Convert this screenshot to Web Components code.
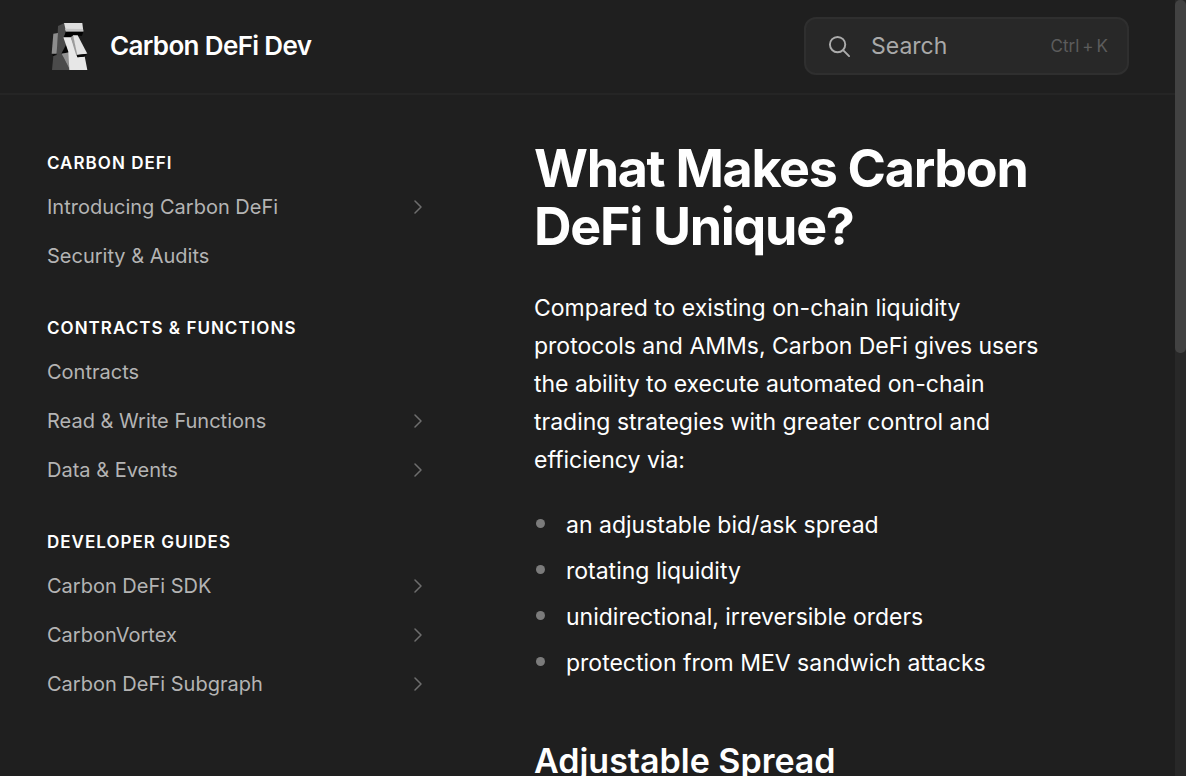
<!DOCTYPE html>
<html lang="en">
<head>
<meta charset="utf-8">
<meta name="viewport" content="width=device-width, initial-scale=1">
<title>What Makes Carbon DeFi Unique? | Carbon DeFi Dev</title>
<style>
  body { margin: 0; background: #1f1f1f; color: #fff; font-family: Inter, "Liberation Sans", sans-serif; }
</style>
</head>
<body>
<docs-app>
  <docs-header slot="header">
    <docs-brand slot="brand" href="#home">Carbon DeFi Dev</docs-brand>
    <docs-search slot="search"></docs-search>
  </docs-header>
  <docs-sidebar slot="nav">
    <nav-group heading="Carbon DeFi">
      <nav-item href="#introducing" expandable>Introducing Carbon DeFi</nav-item>
      <nav-item href="#security">Security &amp; Audits</nav-item>
    </nav-group>
    <nav-group heading="Contracts &amp; Functions">
      <nav-item href="#contracts">Contracts</nav-item>
      <nav-item href="#functions" expandable>Read &amp; Write Functions</nav-item>
      <nav-item href="#data" expandable>Data &amp; Events</nav-item>
    </nav-group>
    <nav-group heading="Developer Guides">
      <nav-item href="#sdk" expandable>Carbon DeFi SDK</nav-item>
      <nav-item href="#vortex" expandable>CarbonVortex</nav-item>
      <nav-item href="#subgraph" expandable>Carbon DeFi Subgraph</nav-item>
    </nav-group>
  </docs-sidebar>
  <docs-article></docs-article>
</docs-app>

<script>
class BaseElement extends HTMLElement {
  constructor() {
    super();
    this.attachShadow({ mode: 'open' });
  }
  connectedCallback() {
    this.shadowRoot.innerHTML = this.render();
  }
}

customElements.define('docs-app', class extends BaseElement {
  render() {
    return `<style>
      :host { display: flex; height: 100vh; overflow: hidden; }
      .page { flex: 1; min-width: 0; overflow: hidden; }
      .columns { display: grid; grid-template-columns: 376px minmax(0, 1fr); column-gap: 111px; padding: 45px 112px 0 47px; }
      .track { flex: none; width: 11px; background: #282828; }
      .thumb { height: 353px; border-radius: 5px; background: #424242; }
    </style>
    <div class="page">
      <slot name="header"></slot>
      <div class="columns"><slot name="nav"></slot><slot></slot></div>
    </div>
    <div class="track" aria-hidden="true"><div class="thumb"></div></div>`;
  }
});

customElements.define('docs-header', class extends BaseElement {
  render() {
    return `<style>
      :host { display: block; }
      header { display: flex; align-items: center; justify-content: space-between; gap: 24px;
        box-sizing: border-box; height: 95px; padding: 0 46px 1px 47px; border-bottom: 2px solid #252525; }
    </style>
    <header><slot name="brand"></slot><slot name="search"></slot></header>`;
  }
});

customElements.define('docs-brand', class extends BaseElement {
  render() {
    return `<style>
      :host { display: block; }
      a { display: flex; align-items: center; gap: 17px; color: #fff; text-decoration: none;
        font-size: 26px; line-height: 32px; font-weight: 600; letter-spacing: -0.025em; white-space: nowrap; }
      svg { display: block; }
    </style>
    <a href="${this.getAttribute('href')}">
      <svg width="46" height="48" viewBox="21 36 138 144" aria-hidden="true">
        <path fill="#4b4b4b" d="M54 48 73 39 80 66 70 82 84 106 68 138H50z"/>
        <path fill="#dedede" d="M72 39H127L130 64H78z"/>
        <path fill="#c4c4c4" d="M75 56 129 57 130 65H78z"/>
        <path fill="#020202" d="M77 65H130L126 77H112L100 76 92 82H72z"/>
        <path fill="#8d8d8d" d="M40 71 54 69 50 131H35z"/>
        <path fill="#050505" d="M79 103 64 131 88 129z"/>
        <path fill="#4b4b4b" d="M40 138 65 131 90 180H36z"/>
        <path fill="#929292" d="M65 131 87 127 90 180z"/>
        <path fill="#e7e7e7" d="M70 82H93L110 130 113 142 134 139 142 180H88L85 125z"/>
        <path fill="#9c9c9c" d="M92 82 100 76 114 132 109 137z"/>
        <path fill="#e3e3e3" d="M99 76H113L142 131 112 135z"/>
        <path fill="#070707" d="M110 135 142 131 133 140 112 142z"/>
        <path fill="#050505" d="M36 134 50 131 40 138z"/>
      </svg>
      <span><slot></slot></span>
    </a>`;
  }
});

customElements.define('docs-search', class extends BaseElement {
  render() {
    return `<style>
      :host { display: block; flex: 0 1 325px; min-width: 0; }
      label { display: flex; align-items: center; box-sizing: border-box; height: 58px; padding: 0 19px 0 22px;
        border: 2px solid #2f2f2f; border-radius: 12px; background: #282828; }
      svg { flex: none; margin-right: 20px; }
      input { flex: 1; width: 0; min-width: 0; padding: 0; border: 0; outline: 0; background: none; color: #fff;
        font: 400 23px/32px Inter, "Liberation Sans", sans-serif; }
      input::placeholder { color: #a9a9a9; opacity: 1; }
      kbd { display: flex; gap: 3px; font: 400 17px/24px Inter, "Liberation Sans", sans-serif; color: #5c5c5c; white-space: nowrap; }
    </style>
    <label>
      <svg width="23" height="23" viewBox="0 0 24 24" fill="none" stroke="#acacac" stroke-width="2" stroke-linecap="round" aria-hidden="true">
        <circle cx="10" cy="10" r="8"/><path d="M16 16 22 22"/>
      </svg>
      <input type="text" placeholder="Search" aria-label="Search">
      <kbd><span>Ctrl</span> <span>+</span> <span>K</span></kbd>
    </label>`;
  }
});

customElements.define('docs-sidebar', class extends BaseElement {
  render() {
    return `<style>
      :host { display: block; }
      nav { display: flex; flex-direction: column; gap: 36px; padding-top: 11px; }
    </style>
    <nav aria-label="Documentation"><slot></slot></nav>`;
  }
});

customElements.define('nav-group', class extends BaseElement {
  render() {
    return `<style>
      :host { display: block; }
      h2 { margin: 0 0 7px; font-size: 17px; line-height: 24px; font-weight: 600; letter-spacing: 0.06em; text-transform: uppercase; }
    </style>
    <h2>${this.getAttribute('heading').replace('&', '&amp;')}</h2>
    <slot></slot>`;
  }
});

customElements.define('nav-item', class extends BaseElement {
  render() {
    const chevron = `<svg width="10" height="14" viewBox="0 0 10 14" fill="none" stroke="#6e6e6e" stroke-width="1.5" stroke-linecap="round" stroke-linejoin="round" aria-hidden="true"><path d="M2 1 8 7 2 13"/></svg>`;
    return `<style>
      :host { display: block; }
      a { display: flex; align-items: center; justify-content: space-between; height: 49px; color: #b4b4b4;
        text-decoration: none; font-size: 20px; line-height: 28px; }
    </style>
    <a href="${this.getAttribute('href')}"><span><slot></slot></span>${this.hasAttribute('expandable') ? chevron : ''}</a>`;
  }
});

customElements.define('docs-article', class extends BaseElement {
  render() {
    return `<style>
      :host { display: block; }
      h1 { margin: 0 0 33px; font-size: 52px; line-height: 58px; font-weight: 700; letter-spacing: -0.025em; }
      p { margin: 0 0 27px; font-size: 23px; line-height: 38px; }
      ul { display: grid; gap: 8px; margin: 0 0 57px; padding: 0; list-style: none; }
      li { display: flex; align-items: center; gap: 21px; font-size: 23px; line-height: 38px; }
      li::before { content: ""; flex: none; width: 9px; height: 9px; margin: 0 0 3px 2px; border-radius: 50%; background: #7b7b7b; }
      h2 { margin: 0; font-size: 34px; line-height: 44px; font-weight: 600; }
    </style>
    <main>
      <h1>What Makes Carbon DeFi Unique?</h1>
      <p>Compared to existing on-chain liquidity protocols and AMMs, Carbon DeFi gives users the ability to execute automated on-chain trading strategies with greater control and efficiency via:</p>
      <ul>
        <li>an adjustable bid/ask spread</li>
        <li>rotating liquidity</li>
        <li>unidirectional, irreversible orders</li>
        <li>protection from MEV sandwich attacks</li>
      </ul>
      <h2>Adjustable Spread</h2>
    </main>`;
  }
});
</script>
</body>
</html>
